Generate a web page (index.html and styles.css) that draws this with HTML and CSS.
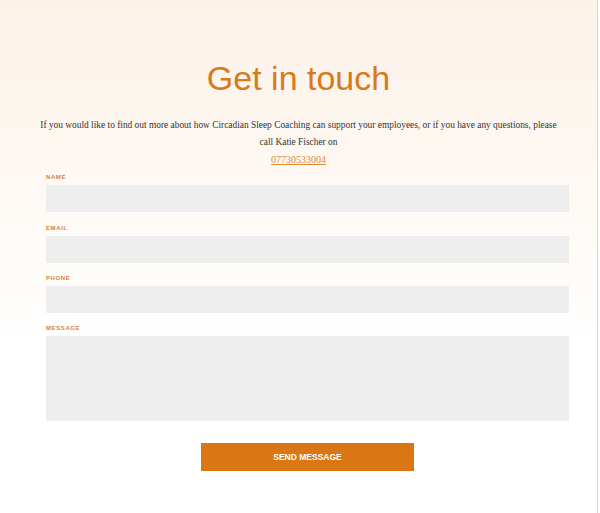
FILE: index.html
```html
<!DOCTYPE html>
<html lang="en">
<head>
    <meta charset="UTF-8">
    <meta name="viewport" content="width=device-width, initial-scale=1.0">
    <title>Get in touch</title>
    <link rel="stylesheet" href="styles.css">
</head>
<body>
    <div class="page">
        <h1 class="title">Get in touch</h1>
        <p class="intro">If you would like to find out more about how Circadian Sleep Coaching can support your employees, or if you have any questions, please call Katie Fischer on<br><a href="tel:07730533004">07730533004</a></p>

        <form class="contact">
            <label class="field">
                <span>Name</span>
                <input type="text">
            </label>
            <label class="field">
                <span>Email</span>
                <input type="email">
            </label>
            <label class="field">
                <span>Phone</span>
                <input type="tel">
            </label>
            <label class="field">
                <span>Message</span>
                <textarea></textarea>
            </label>
            <button type="button" class="send">Send message</button>
        </form>
    </div>
</body>
</html>
```

FILE: styles.css
```css
html, body { margin: 0; height: 100%; }
body { background: #fff; font-family: "Liberation Serif", "Times New Roman", serif; }
.page { width: 598px; min-height: 100%; border-right: 1px solid #d8d4d0; background: linear-gradient(#fcf2e8 0px, #fffdfb 300px, #fff 340px); padding-top: 56px; box-sizing: border-box; }
.title { margin: 0; text-align: center; font-family: "Liberation Sans", Arial, sans-serif; font-weight: normal; font-size: 34px; line-height: 44px; color: #d97a1a; }
.intro { margin: 17px 0 0; padding: 0 35px; text-align: center; font-size: 9.4px; line-height: 17px; color: #333; }
.intro a { color: #e08a3a; font-size: 10px; }
.contact { width: 523px; margin: 4px 0 0 46px; display: flex; flex-direction: column; gap: 11px; padding-bottom: 40px; }
.field { display: flex; flex-direction: column; gap: 3px; }
.field:nth-child(2) { margin-top: 1px; }
.field span { font-family: "Liberation Sans", Arial, sans-serif; font-size: 6px; line-height: 9px; font-weight: bold; text-transform: uppercase; letter-spacing: 0.6px; color: #d4843a; }
.field input, .field textarea { border: none; background: #eeeeee; height: 27px; padding: 0 8px; box-sizing: border-box; display: block; width: 100%; font: inherit; resize: none; }
.field textarea { height: 85px; }
.send { align-self: center; margin-top: 11px; width: 213px; height: 28px; border: none; background: #da7714; color: #fff; font-family: "Liberation Sans", Arial, sans-serif; font-weight: bold; font-size: 8.5px; text-transform: uppercase; cursor: pointer; }
```
